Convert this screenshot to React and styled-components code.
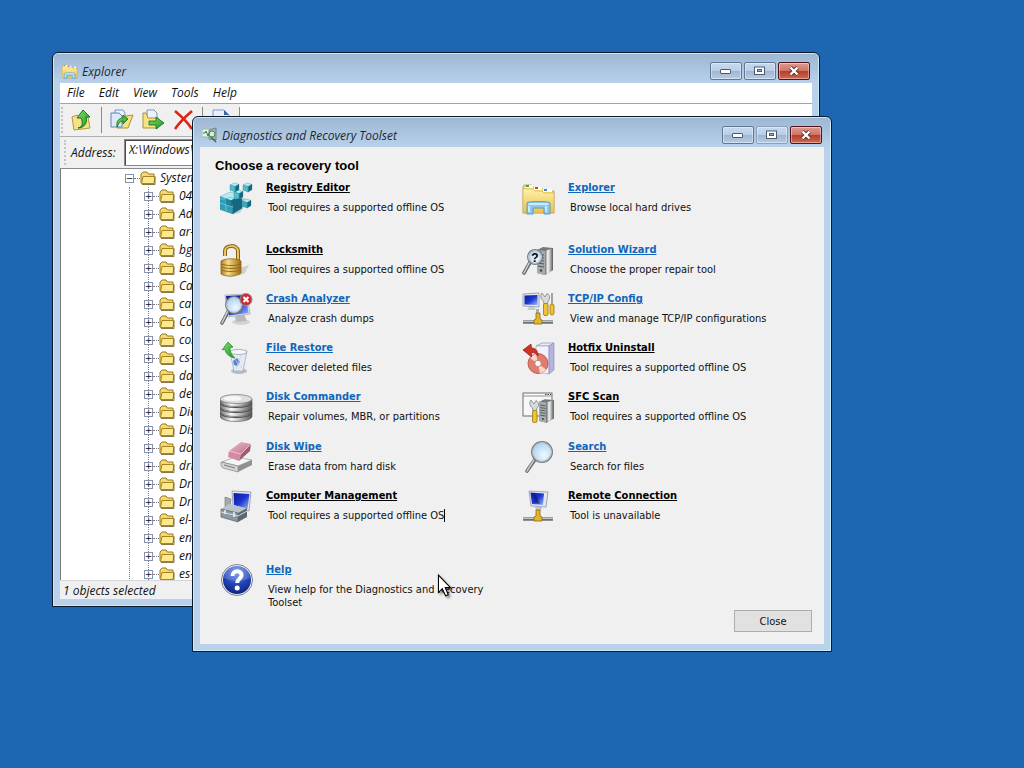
import React from 'react'
import styled, { createGlobalStyle, css } from 'styled-components'

const folders = [
    '0409', 'AdvancedInstallers', 'ar-SA', 'bg-BG', 'Boot', 'CatRoot', 'catroot2', 'CodeIntegrity',
    'config', 'cs-CZ', 'da-DK', 'de-DE', 'DiagSvcs', 'Dism', 'downlevel', 'drivers', 'DriverState',
    'DriverStore', 'el-GR', 'en-GB', 'en-US', 'es-ES',
]

const OFFLINE = 'Tool requires a supported offline OS'

/* ---------- icons ---------- */

const Cube = ({ x, y, s, top = '#b4ecf2', left = '#2f9db8', right = '#15687f' }) => (
    <g stroke="#1d7389" strokeWidth=".3">
        <path d={`M${x} ${y + s * .22}L${x + s * .45} ${y}L${x + s} ${y + s * .15}L${x + s * .58} ${y + s * .4}Z`} fill={top} />
        <path d={`M${x} ${y + s * .22}L${x + s * .58} ${y + s * .4}V${y + s}L${x} ${y + s * .8}Z`} fill={left} />
        <path d={`M${x + s * .58} ${y + s * .4}L${x + s} ${y + s * .15}V${y + s * .74}L${x + s * .58} ${y + s}Z`} fill={right} />
    </g>
)

const Defs = () => (
    <defs>
        <linearGradient id="screen" x1="0" y1="0" x2="1" y2="1">
            <stop offset="0" stopColor="#0a1a9c" />
            <stop offset=".5" stopColor="#1b35d0" />
            <stop offset="1" stopColor="#9fb8f5" />
        </linearGradient>
        <linearGradient id="metal" x1="0" x2="1">
            <stop offset="0" stopColor="#6f6f6f" />
            <stop offset=".35" stopColor="#fafafa" />
            <stop offset=".7" stopColor="#a8a8a8" />
            <stop offset="1" stopColor="#555" />
        </linearGradient>
        <linearGradient id="gold" x1="0" x2="1">
            <stop offset="0" stopColor="#b07c1c" />
            <stop offset=".35" stopColor="#f7dd83" />
            <stop offset="1" stopColor="#9c6a12" />
        </linearGradient>
        <linearGradient id="folder" x1="0" y1="0" x2="0" y2="1">
            <stop offset="0" stopColor="#fff0a8" />
            <stop offset="1" stopColor="#e9c04c" />
        </linearGradient>
        <radialGradient id="lens" cx=".6" cy=".65" r=".7">
            <stop offset="0" stopColor="#f1faff" />
            <stop offset="1" stopColor="#a5cdf0" />
        </radialGradient>
        <radialGradient id="ball" cx=".5" cy=".2" r=".8">
            <stop offset="0" stopColor="#6f93e8" />
            <stop offset=".6" stopColor="#2143b8" />
            <stop offset="1" stopColor="#10237c" />
        </radialGradient>
        <linearGradient id="pink" x1="0" y1="0" x2="1" y2="1">
            <stop offset="0" stopColor="#f0b9cb" />
            <stop offset="1" stopColor="#b9708b" />
        </linearGradient>
        <linearGradient id="green" x1="0" y1="0" x2="1" y2="1">
            <stop offset="0" stopColor="#7fe06a" />
            <stop offset="1" stopColor="#1c9424" />
        </linearGradient>
    </defs>
)

const Wrench = () => (
    <>
        <path d="M20 1L23 5L25 1.500C28 3 28.500 7 26 9L25.500 12H22L21.500 9C18.500 7 18 3 20 1Z" fill="#d8dadc" stroke="#7f8488" strokeWidth=".8" />
        <rect x="21.500" y="11.500" width="4.500" height="12" rx="1.500" fill="#f1c232" stroke="#9d7510" strokeWidth=".8" />
    </>
)

const Server = () => (
    <>
        <path d="M17 8L23 5L33 6V28L25 33L17 31Z" fill="#73797c" />
        <path d="M17 8L25 9V33L17 31Z" fill="#a6abad" />
        <path d="M25 9L33 6V28L25 33Z" fill="url(#metal)" />
        <path d="M18 12L24 13M18 15L24 16M18 18L24 19M18 21L24 22M18 24L24 25" stroke="#4e5456" strokeWidth="1" />
        <circle cx="21" cy="28.500" r="1.200" fill="#3f4547" />
    </>
)

const NetPipe = () => (
    <>
        <path d="M1 30H31" stroke="#6b7276" strokeWidth="3.500" />
        <path d="M1 29.300H31" stroke="#d5dadc" strokeWidth="1" />
        <path d="M14 21H18V27L20 28V32H12V28L14 27Z" fill="#e3b52d" stroke="#8d6a0a" strokeWidth=".8" />
    </>
)

const Magnifier = ({ cx, cy, r, tail }) => (
    <>
        <path d={`M${cx - r * .7} ${cy + r * .75}L${tail[0]} ${tail[1]}`} stroke="#63686c" strokeWidth="3.600" strokeLinecap="round" />
        <path d={`M${cx - r * .8} ${cy + r * .8}L${tail[0]} ${tail[1]}`} stroke="#c9cdd0" strokeWidth="1.500" strokeLinecap="round" />
        <circle cx={cx} cy={cy} r={r} fill="url(#lens)" stroke="#777d83" strokeWidth="2" />
        <circle cx={cx} cy={cy} r={r - .6} fill="none" stroke="#e2e6ea" strokeWidth=".8" />
    </>
)

const art = {
    registry: (
        <>
            <path d="M12 12L29 19L20 32L12 33Z" fill="#c9d2d4" />
            <Cube x={0} y={11} s={22} />
            <path d="M0 22L13 26M6 18V30M0 18L22 17" stroke="#77cfdc" strokeWidth=".8" fill="none" />
            <Cube x={6} y={16} s={9} left="#1f86a2" />
            <Cube x={14} y={9} s={9} left="#52bfd2" />
            <Cube x={10} y={2} s={9} left="#4dbccf" />
            <Cube x={23} y={2} s={9} left="#4dbccf" />
            <Cube x={22} y={18} s={9} left="#3aabc1" />
        </>
    ),
    lock: (
        <>
            <path d="M20 25L29 22L25 30L18 33Z" fill="#cfcfcf" />
            <path d="M5 13V8C5 2 17 1 18 8V17" fill="none" stroke="#8a6416" strokeWidth="4" />
            <path d="M5 13V8C5 2 17 1 18 8V17" fill="none" stroke="#e8c463" strokeWidth="2" />
            <path d="M1 18C6 15 17 15 21 18V30C16 34 6 34 1 31Z" fill="url(#gold)" stroke="#8a6416" strokeWidth=".8" />
            <path d="M1 21C7 23 15 23 21 21M1 24C7 26 15 26 21 24M1 27C7 29 15 29 21 27" fill="none" stroke="#96691a" strokeWidth="1" />
        </>
    ),
    crash: (
        <>
            <ellipse cx="21" cy="30" rx="9" ry="3" fill="#d3d4d6" />
            <path d="M15 24L24 22L27 29L16 30Z" fill="#b6babd" />
            <path d="M5 3L27 2L30 22L8 25Z" fill="#dfe3ea" stroke="#8e98a8" strokeWidth=".6" />
            <path d="M6 4L26 3L28.500 21L9 23.500Z" fill="url(#screen)" />
            <Magnifier cx={14} cy={13} r={8} tail={[2, 31]} />
            <circle cx="26" cy="7.500" r="6" fill="#cf2a2a" stroke="#8f9297" strokeWidth="1" />
            <path d="M23.500 5L28.500 10M28.500 5L23.500 10" stroke="#fff" strokeWidth="2" />
        </>
    ),
    restore: (
        <>
            <ellipse cx="19" cy="30" rx="8" ry="3" fill="#b4bbc1" />
            <path d="M10 11L27 10L23 30H14Z" fill="#e3eaf1" stroke="#a4b0ba" strokeWidth=".8" />
            <ellipse cx="18.500" cy="11" rx="8.500" ry="2.500" fill="#f4f8fb" stroke="#8fa0ae" strokeWidth=".8" />
            <path d="M13 20L17 17L20 21L17 25L14 24Z" fill="#5f82cf" />
            <path d="M12 15L22 27M21 14L16 28" stroke="#c3cfdb" strokeWidth=".7" />
            <path d="M2 9L8 1L13 6L10 7C10 12 12 14 15 17C9 16 5 12 5 8Z" fill="url(#green)" stroke="#1f8a28" strokeWidth=".7" />
        </>
    ),
    disks: (
        <>
            {[22, 17, 12].map((y) => (
                <g key={y}>
                    <path d={`M0 ${y}V${y + 5}C3 ${y + 11} 29 ${y + 11} 32 ${y + 5}V${y}Z`} fill="url(#metal)" stroke="#65686a" strokeWidth=".7" />
                    <path d={`M0 ${y + 1}C3 ${y + 7} 29 ${y + 7} 32 ${y + 1}`} fill="none" stroke="#4f5254" strokeWidth="1.200" />
                </g>
            ))}
            <path d="M0 9V12C3 18 29 18 32 12V9Z" fill="url(#metal)" stroke="#65686a" strokeWidth=".7" />
            <ellipse cx="16" cy="9" rx="16" ry="4.500" fill="#dedede" stroke="#777" strokeWidth=".7" />
            <ellipse cx="13" cy="8.500" rx="9" ry="2.500" fill="#f6f6f6" />
        </>
    ),
    wipe: (
        <>
            <path d="M2 22L15 17L32 20L18 26Z" fill="#f4f5f5" stroke="#8b8f8f" strokeWidth=".6" />
            <path d="M1 22L18 26V32L3 28C1 27 1 25 1 22Z" fill="#d3d6d5" stroke="#808583" strokeWidth=".7" />
            <path d="M18 26L32 20V25L18 32Z" fill="#8d9290" />
            <path d="M4 25L15 28" stroke="#777" strokeWidth="1" />
            <path d="M9 11L21 2L31 4L21 14Z" fill="url(#pink)" />
            <path d="M9 11L21 14L19 21L8 17Z" fill="#d48aa4" />
            <path d="M21 14L31 4L30 11L19 21Z" fill="#a45875" />
            <path d="M9 11L21 14L31 4" fill="none" stroke="#f5cfdb" strokeWidth=".7" />
        </>
    ),
    management: (
        <>
            <path d="M12 2L31 3L29 22L13 18Z" fill="#e3e7ee" stroke="#7f8896" strokeWidth=".7" />
            <path d="M13.500 4L29.500 5L27.500 20L14 16Z" fill="url(#screen)" />
            <path d="M5 8L11 10L10 20L5 19Z" fill="#a3a8a9" stroke="#6f7577" strokeWidth=".6" />
            <path d="M1 20L9 15L26 19L18 25Z" fill="#b9c3ca" />
            <path d="M1 20L18 24V33L1 28Z" fill="#8c99a3" stroke="#56626b" strokeWidth=".7" />
            <path d="M18 24L27 19V28L18 33Z" fill="#5b6871" />
            <path d="M1 23L18 27L27 22" fill="none" stroke="#dbe2e7" strokeWidth=".9" />
            <path d="M5 21V25M14 23V28" stroke="#eef2f4" strokeWidth="1.500" />
        </>
    ),
    help: (
        <>
            <circle cx="17" cy="17" r="15.500" fill="#eef0f4" stroke="#7a8190" strokeWidth="1" />
            <circle cx="17" cy="17" r="14" fill="url(#ball)" />
            <path d="M4 15A13 13 0 0 1 30 15C22 19 12 19 4 15Z" fill="#fff" opacity=".16" />
            <path d="M12.500 13C12.500 6.500 22 7 21.500 12.500C21.200 16 17.200 15.500 17.200 20" fill="none" stroke="#fff" strokeWidth="4" />
            <circle cx="17.200" cy="25" r="2.500" fill="#fff" />
        </>
    ),
    explorer: (
        <>
            <path d="M2 4H10L12 7H20L22 10H32V32H1V6Z" fill="#f6da7b" stroke="#b79336" strokeWidth=".7" />
            <rect x="4" y="4" width="7" height="3" fill="#fff" />
            <rect x="4" y="4" width="3" height="2" fill="#3da838" />
            <rect x="12" y="6" width="8" height="3" fill="#fff" />
            <rect x="13" y="6" width="3" height="2" fill="#cf4326" />
            <rect x="21" y="8" width="9" height="3" fill="#fff" />
            <rect x="22" y="8" width="3" height="2" fill="#3f87cd" />
            <path d="M1 8H11L13 10H20L22 12H32V32H1Z" fill="url(#folder)" stroke="#d2ac48" strokeWidth=".6" />
            <path d="M5 22C5 20 28 20 28 22V33H22V27H11V33H5Z" fill="#8cc9ec" stroke="#4c97c9" strokeWidth=".9" />
            <path d="M6.500 23H26.500M7 25V31M24 25V31" stroke="#e0f6ff" strokeWidth="1.500" />
        </>
    ),
    wizard: (
        <>
            <g transform="translate(-2 -1)"><Server /></g>
            <Magnifier cx={13} cy={14} r={7} tail={[2, 30]} />
            <text x="13" y="18.500" textAnchor="middle" fontFamily="Liberation Sans, sans-serif" fontWeight="bold" fontSize="12">?</text>
        </>
    ),
    tcpip: (
        <>
            <path d="M1 2L17 1V15L1 14Z" fill="#e6e9ef" stroke="#8a92a0" strokeWidth=".8" />
            <path d="M2.500 3.500L15.500 3V13L2.500 12.500Z" fill="url(#screen)" />
            <path d="M7 15H12L14 18H5Z" fill="#c5cad0" />
            <path d="M14 17H17V22H14Z" fill="#aab0b6" />
            <NetPipe />
            <Wrench />
            <path d="M30 1V13" stroke="#7d8387" strokeWidth="1.400" />
            <rect x="28" y="12" width="4" height="11" rx="2" fill="#f1c232" stroke="#9d7510" strokeWidth=".8" />
        </>
    ),
    hotfix: (
        <>
            <path d="M14 5L20 2H32L27 5Z" fill="#e8e9fb" stroke="#8f92b8" strokeWidth=".7" />
            <path d="M14 5H27V33L14 31Z" fill="#f3f2fb" stroke="#a4a5c5" strokeWidth=".7" />
            <path d="M27 5L32 2V29L27 33Z" fill="#b4b4dc" stroke="#8588b4" strokeWidth=".6" />
            <circle cx="16" cy="22.500" r="10" fill="#df7d70" stroke="#ba5348" strokeWidth=".9" />
            <path d="M16 22.500L8 17A10 10 0 0 1 14 13ZM16 22.500L24 28.500A10 10 0 0 1 18 32.500Z" fill="#f9d5cd" />
            <circle cx="16" cy="22.500" r="3.200" fill="#fff" stroke="#c06a60" strokeWidth=".8" />
            <path d="M1 9L9 3L9.500 7C14 7 16 10 16 15C14 12 12 11 9.500 12V16Z" fill="#cd3425" stroke="#8e1e14" strokeWidth=".7" />
        </>
    ),
    sfc: (
        <>
            <rect x="1" y="3" width="29" height="23" fill="#f7f8f8" stroke="#6d7173" strokeWidth="1" />
            <path d="M1 6H30" stroke="#8f9496" strokeWidth="1" />
            <path d="M23 4.500H24.500M25.500 4.500H27M28 4.500H29" stroke="#444" strokeWidth="1" />
            <g transform="translate(2 5) scale(.9 .84)"><Server /></g>
            <g transform="translate(-11 9)"><Wrench /></g>
        </>
    ),
    search: <Magnifier cx={20} cy={12} r={10} tail={[5, 31]} />,
    remote: (
        <>
            <path d="M7 2L26 3L24 18L9 17Z" fill="#e3e7f1" stroke="#8d96a8" strokeWidth=".8" />
            <path d="M8.500 3.500L22 4.500L21 16L10 15Z" fill="url(#screen)" />
            <path d="M11 4L14 6L18 15L13 14Z" fill="#0a1060" opacity=".5" />
            <path d="M13 18H20L19 22H14Z" fill="#c1c6cd" />
            <NetPipe />
        </>
    ),
}

const FolderIcon = () => (
    <svg width="16" height="14" viewBox="0 0 16 14">
        <path d="M1 12V3L3 1H7L8.500 3H14V12Z" fill="#f3d873" stroke="#9c7b1d" />
        <path d="M3 5.500H15L14 12.500H1.500Z" fill="#fbe98d" stroke="#a78420" />
        <path d="M2 13.500H15V6" fill="none" stroke="#6d561a" strokeWidth=".8" />
    </svg>
)

const UpIcon = () => (
    <svg width="22" height="22" viewBox="0 0 22 22">
        <path d="M1 8L6 6L8 8H17L19 19L3 21Z" fill="#f5e287" stroke="#b29a35" />
        <path d="M7 19C12 18 12 13 10 9H6L12 1L19 8H15C17 14 13 19 7 19Z" fill="url(#green)" stroke="#13681a" strokeWidth=".9" />
    </svg>
)

const CopyIcon = () => (
    <svg width="24" height="22" viewBox="0 0 24 22">
        <path d="M5 1H13L15 4V12H5Z" fill="#eaf3fc" stroke="#6f93bd" />
        <path d="M9 8L23 6L18 19H7Z" fill="#f5e287" stroke="#ad9333" />
        <path d="M1 4H9L12 7V18H1Z" fill="#dcebfa" stroke="#5d86b4" />
        <path d="M7 18C6 12 9 9 13 9V6L18 10L13 15V12C10 12 9 14 7 18Z" fill="url(#green)" stroke="#13681a" strokeWidth=".8" />
    </svg>
)

const MoveIcon = () => (
    <svg width="23" height="22" viewBox="0 0 23 22">
        <path d="M5 1H12L15 4V11H5Z" fill="#eaf3fc" stroke="#8293b0" />
        <path d="M1 4H4L6 9H16V19H1Z" fill="#f5e287" stroke="#ad9333" />
        <path d="M7 12H14V8L22 14L14 20V16H7Z" fill="url(#green)" stroke="#13681a" strokeWidth=".8" />
    </svg>
)

const DeleteIcon = () => (
    <svg width="21" height="20" viewBox="0 0 21 20">
        <path d="M2 1C8 6 15 13 19 19M19 1C12 7 6 13 2 19" fill="none" stroke="#de2414" strokeWidth="2.600" />
    </svg>
)

const PropsIcon = () => (
    <svg width="20" height="22" viewBox="0 0 20 22">
        <path d="M2 1H13L18 6V21H2Z" fill="#e6effa" stroke="#7c9cc8" />
        <path d="M13 1V6H18Z" fill="#3d62ad" />
    </svg>
)

const DartIcon = () => (
    <svg width="16" height="16" viewBox="0 0 16 16">
        <rect x="0" y="2" width="11" height="8" fill="#e9f4ea" stroke="#9fb5ae" />
        <path d="M1 6H3L4 4L6 9L7 6" fill="none" stroke="#22803a" />
        <path d="M7 3L14 1V13L7 12Z" fill="#a5b3b6" stroke="#66757a" strokeWidth=".8" />
        <circle cx="10" cy="7" r="3" fill="#d5ecd8" stroke="#3c8b50" />
        <path d="M9 10L14 15" stroke="#555f66" strokeWidth="1.500" />
    </svg>
)

/* ---------- window frame ---------- */

function TitleBar({ icon, title, dimMax }) {
    return (
        <Bar>
            {icon}
            <Caption>{title}</Caption>
            <FrameButton type="button" aria-label="Minimize">
                <svg width="12" height="8" viewBox="0 0 12 8"><rect x=".5" y="2.500" width="10" height="4" rx=".5" fill="#fff" stroke="#4c5b70" /></svg>
            </FrameButton>
            <FrameButton type="button" aria-label="Maximize" $dim={dimMax}>
                <svg width="12" height="10" viewBox="0 0 12 10">
                    <rect x=".5" y="1" width="10" height="7.500" fill="#fff" stroke="#4c5b70" />
                    <rect x="3.500" y="3.500" width="4" height="2" fill="#9db4d0" stroke="#4c5b70" />
                </svg>
            </FrameButton>
            <FrameButton type="button" aria-label="Close window" $red>
                <svg width="12" height="10" viewBox="0 0 12 10">
                    <path d="M2.500 1.500L9.500 8.500M9.500 1.500L2.500 8.500" stroke="#5a2a2c" strokeWidth="4" />
                    <path d="M2.500 1.500L9.500 8.500M9.500 1.500L2.500 8.500" stroke="#fff" strokeWidth="2.400" />
                </svg>
            </FrameButton>
        </Bar>
    )
}

function Tool({ icon, name, text, off, caret }) {
    return (
        <ToolItem>
            <ToolArt viewBox="0 0 34 34" aria-hidden="true">{art[icon]}</ToolArt>
            <div>
                <ToolLink href="#" $off={off}>{name}</ToolLink>
                <ToolText>{text}{caret && <Caret />}</ToolText>
            </div>
        </ToolItem>
    )
}

function Explorer() {
    return (
        <ExplorerWindow>
            <TitleBar title="Explorer" icon={<svg width="16" height="16" viewBox="0 0 34 34">{art.explorer}</svg>} />
            <Menu>
                {['File', 'Edit', 'View', 'Tools', 'Help'].map((m) => <MenuButton type="button" key={m}>{m}</MenuButton>)}
            </Menu>
            <Toolbar>
                <Grip />
                <ToolButton type="button" aria-label="Up"><UpIcon /></ToolButton>
                <Divider />
                <ToolButton type="button" aria-label="Copy to"><CopyIcon /></ToolButton>
                <ToolButton type="button" aria-label="Move to"><MoveIcon /></ToolButton>
                <ToolButton type="button" aria-label="Delete"><DeleteIcon /></ToolButton>
                <Divider />
                <ToolButton type="button" aria-label="Properties"><PropsIcon /></ToolButton>
                <Divider />
            </Toolbar>
            <AddressBar>
                <Grip />
                <label htmlFor="address">Address:</label>
                <AddressInput id="address" defaultValue="X:\Windows\System32" />
            </AddressBar>
            <Tree>
                <Branch>
                    <Root><Toggle>−</Toggle><Dots /><FolderIcon /><span>System32</span></Root>
                    <Children>
                        {folders.map((name) => (
                            <Node key={name}><Toggle>+</Toggle><Dots /><FolderIcon /><span>{name}</span></Node>
                        ))}
                    </Children>
                </Branch>
            </Tree>
            <Status>1 objects selected</Status>
        </ExplorerWindow>
    )
}

function Toolset() {
    return (
        <ToolsetWindow>
            <TitleBar title="Diagnostics and Recovery Toolset" icon={<DartIcon />} dimMax />
            <Panel>
                <Heading>Choose a recovery tool</Heading>
                <Tools>
                    <Tool icon="registry" name="Registry Editor" text={OFFLINE} off />
                    <Tool icon="explorer" name="Explorer" text="Browse local hard drives" />
                    <Tool icon="lock" name="Locksmith" text={OFFLINE} off />
                    <Tool icon="wizard" name="Solution Wizard" text="Choose the proper repair tool" />
                    <Tool icon="crash" name="Crash Analyzer" text="Analyze crash dumps" />
                    <Tool icon="tcpip" name="TCP/IP Config" text="View and manage TCP/IP configurations" />
                    <Tool icon="restore" name="File Restore" text="Recover deleted files" />
                    <Tool icon="hotfix" name="Hotfix Uninstall" text={OFFLINE} off />
                    <Tool icon="disks" name="Disk Commander" text="Repair volumes, MBR, or partitions" />
                    <Tool icon="sfc" name="SFC Scan" text={OFFLINE} off />
                    <Tool icon="wipe" name="Disk Wipe" text="Erase data from hard disk" />
                    <Tool icon="search" name="Search" text="Search for files" />
                    <Tool icon="management" name="Computer Management" text={OFFLINE} off caret />
                    <Tool icon="remote" name="Remote Connection" text="Tool is unavailable" off />
                    <Tool icon="help" name="Help" text="View help for the Diagnostics and Recovery Toolset" />
                </Tools>
                <Footer><CloseButton type="button">Close</CloseButton></Footer>
            </Panel>
        </ToolsetWindow>
    )
}

function App() {
    return (
        <Desktop>
            <GlobalStyle />
            <svg width="0" height="0" aria-hidden="true"><Defs /></svg>
            <Explorer />
            <Toolset />
            <Pointer viewBox="0 0 14 22" aria-hidden="true">
                <path d="M1 1V17L4.500 13.500L7.500 20L10 19L7.200 12.500H12Z" fill="#fff" stroke="#000" strokeWidth="1" />
            </Pointer>
        </Desktop>
    )
}

const GlobalStyle = createGlobalStyle`
    *{
        box-sizing: border-box;
    }
    body{
        margin: 0;
        background: #1e66b2;
    }
    button, input{
        font: inherit;
        color: inherit;
        padding: 0;
        margin: 0;
        border: none;
        background: none;
    }
`;

const Desktop = styled.main`
    position: relative;
    min-height: 100vh;
    overflow: hidden;
    background: #1e66b2;
`;

const windowFrame = css`
    position: absolute;
    display: flex;
    flex-direction: column;
    padding: 0 7px 7px;
    border: 1px solid #0b1a2b;
    border-radius: 6px 6px 0 0;
    background: linear-gradient(#9db6d2, #b9d1ea 30px);
    box-shadow: inset 0 0 0 1px #c6ebfa;
`;

const ExplorerWindow = styled.section`
    ${windowFrame}
    left: 52px;
    top: 52px;
    width: min(768px, calc(100vw - 60px));
    font: italic 12px/16px "Open Sans", "Noto Sans", sans-serif;
    color: #111;
`;

const ToolsetWindow = styled.section`
    ${windowFrame}
    left: 192px;
    top: 116px;
    width: min(640px, calc(100vw - 200px));
    font: 11px/13px "DejaVu Sans Condensed", "DejaVu Sans", sans-serif;
    color: #111;
`;

const Bar = styled.header`
    display: flex;
    align-items: center;
    gap: 2px;
    height: 30px;
    padding: 6px 2px 0;
    flex: none;
`;

const Caption = styled.h1`
    flex: 1;
    margin: 0;
    padding: 2px 0 0 2px;
    font: italic 12px/16px "Open Sans", "Noto Sans", sans-serif;
    color: #1c2733;
`;

const FrameButton = styled.button`
    display: flex;
    align-items: center;
    justify-content: center;
    width: 32px;
    height: 18px;
    border: 1px solid ${({ $red }) => ($red ? '#4b1620' : '#5f7896')};
    border-radius: 2px;
    background: ${({ $red }) => ($red
        ? 'linear-gradient(#dc9a90 0%, #d17468 48%, #b93a2a 50%, #cf6a50 100%)'
        : 'linear-gradient(#c8daee 0%, #b9cee6 48%, #9cb5d1 50%, #b6cde6 100%)')};
    box-shadow: inset 0 0 0 1px rgba(255, 255, 255, 0.4);
    ${({ $dim }) => $dim && css`
        border-color: #8aa2bf;
    `}
`;

const Menu = styled.nav`
    display: flex;
    gap: 14px;
    height: 21px;
    padding: 0 7px;
    background: #fff;
    border-bottom: 1px solid #a3a3a3;
`;

const MenuButton = styled.button`
    font-style: italic;
`;

const Toolbar = styled.div`
    display: flex;
    align-items: center;
    gap: 8px;
    height: 33px;
    padding-left: 1px;
    background: linear-gradient(90deg, #f0f0f0 180px, #fff 180px);
    border-bottom: 1px solid #b0b0b0;
`;

const Grip = styled.span`
    align-self: stretch;
    width: 2px;
    margin: 3px 0;
    border-left: 2px dotted #c4c4c4;
`;

const ToolButton = styled.button`
    display: flex;
`;

const Divider = styled.span`
    width: 1px;
    height: 26px;
    background: #8c8c8c;
`;

const AddressBar = styled.div`
    display: flex;
    align-items: center;
    gap: 5px;
    height: 32px;
    padding-left: 4px;
    background: #f0f0f0;
    border-bottom: 1px solid #8a8a8a;
    label{
        margin-right: 3px;
    }
`;

const AddressInput = styled.input`
    flex: 1;
    align-self: stretch;
    margin: 2px 0;
    padding: 0 4px 5px;
    border: 1px solid #8a8a8a;
    box-shadow: inset 1px 1px 0 #4a4a4a;
    background: #fff;
`;

const Tree = styled.div`
    height: 411px;
    padding-left: 64px;
    overflow: hidden;
    background: #fff;
    border-left: 1px solid #7a7a7a;
`;

const Branch = styled.div`
    min-height: 100%;
`;

const treeRow = css`
    display: flex;
    align-items: center;
    height: 18px;
    span:last-child{
        margin-left: 4px;
        white-space: nowrap;
    }
`;

const Root = styled.div`
    ${treeRow}
`;

const Children = styled.ul`
    margin: 0 0 0 4px;
    padding: 0 0 0 14px;
    list-style: none;
    border-left: 1px dotted #777;
`;

const Node = styled.li`
    ${treeRow}
    background: linear-gradient(#777 50%, transparent 0) 4px 0 / 1px 2px repeat-y;
`;

const Toggle = styled.span`
    display: flex;
    align-items: center;
    justify-content: center;
    width: 9px;
    height: 9px;
    flex: none;
    border: 1px solid #8494ad;
    background: #fff;
    font: 9px/9px "DejaVu Sans", sans-serif;
`;

const Dots = styled.span`
    width: 6px;
    flex: none;
    border-top: 1px dotted #777;
`;

const Status = styled.footer`
    height: 19px;
    padding: 2px 3px 0;
    background: #f0f0f0;
    border-top: 1px solid #d5d5d5;
`;

const Panel = styled.div`
    padding: 11px 0 12px;
    background: #f0f0f0;
`;

const Heading = styled.h2`
    margin: 0 0 7px 15px;
    font: bold 13px/16px "Liberation Sans", Arial, sans-serif;
    color: #000;
`;

const Tools = styled.div`
    display: grid;
    grid-template-columns: 1fr 1fr;
    grid-template-rows: 62px repeat(3, 49px) 50px 49px 74px 47px;
    padding-left: 20px;
`;

const ToolItem = styled.div`
    display: flex;
    gap: 12px;
`;

const ToolArt = styled.svg`
    width: 34px;
    height: 34px;
    flex: none;
`;

const ToolLink = styled.a`
    display: block;
    width: max-content;
    margin-bottom: 6px;
    font-weight: bold;
    line-height: 14px;
    text-decoration: underline;
    color: ${({ $off }) => ($off ? '#000' : '#0f66bd')};
`;

const ToolText = styled.p`
    max-width: 220px;
    margin: 0 0 0 2px;
`;

const Caret = styled.span`
    display: inline-block;
    width: 1px;
    height: 13px;
    vertical-align: top;
    background: #000;
`;

const Footer = styled.div`
    display: flex;
    justify-content: flex-end;
    padding-right: 12px;
`;

const CloseButton = styled.button`
    width: 78px;
    height: 22px;
    border: 1px solid #adadad;
    background: #e1e1e1;
`;

/* mouse pointer resting over the help text */
const Pointer = styled.svg`
    position: absolute;
    left: 437px;
    top: 574px;
    width: 16px;
    height: 24px;
    filter: drop-shadow(2px 2px 1px rgba(0, 0, 0, 0.4));
`;

export default App
